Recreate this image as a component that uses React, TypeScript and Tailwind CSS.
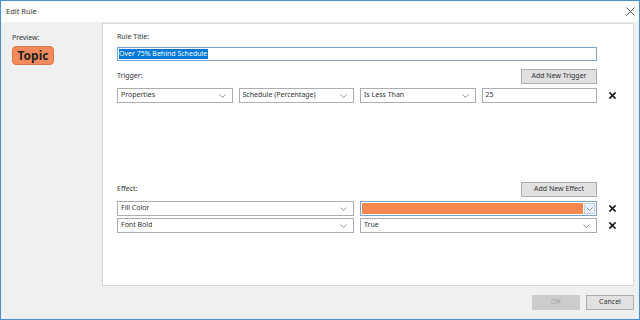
import type { ReactNode } from 'react';

const FONT = { fontFamily: '"Noto Sans", "Liberation Sans", Arial, sans-serif' };

function Chevron() {
  return (
    <svg width="7" height="4" viewBox="0 0 7 4" className="shrink-0">
      <polyline points="0.5,0.5 3.5,3.5 6.5,0.5" fill="none" stroke="#7a7a7a" strokeWidth="0.8" />
    </svg>
  );
}

function DelX() {
  return (
    <svg width="7" height="7" viewBox="0 0 7 7" className="shrink-0">
      <path d="M1 1L6 6M6 1L1 6" stroke="#111" strokeWidth="1.6" strokeLinecap="square" />
    </svg>
  );
}

function Select({ value }: { value: string }) {
  return (
    <div className="flex h-[15px] items-center justify-between border border-[#abadb3] bg-white pl-[3px] pr-[6px] text-[7px] text-[#333]">
      <span className="truncate">{value}</span>
      <Chevron />
    </div>
  );
}

function Btn({ children, disabled }: { children: ReactNode; disabled?: boolean }) {
  return (
    <div
      className={
        'flex h-[15px] items-center justify-center border text-[7px] ' +
        (disabled
          ? 'border-[#cccccc] bg-[#cccccc] text-[#a0a0a0]'
          : 'border-[#adadad] bg-[#e1e1e1] text-[#333]')
      }
    >
      {children}
    </div>
  );
}

function RowWithDelete({ children }: { children: ReactNode }) {
  return (
    <div className="flex items-center">
      <div className="w-[480px]">{children}</div>
      <div className="flex w-[30px] justify-center">
        <DelX />
      </div>
    </div>
  );
}

export default function App() {
  return (
    <div
      className="flex h-[320px] w-[640px] flex-col overflow-hidden border border-[#4a8fd6] bg-[#f0f0f0]"
      style={FONT}
    >
      {/* title bar */}
      <div className="flex h-[21px] shrink-0 items-center justify-between bg-white pl-[5px] pr-[4px]">
        <span className="text-[7.5px] text-[#333]">Edit Rule</span>
        <svg width="9" height="9" viewBox="0 0 9 9">
          <path d="M0.5 0.5L8.5 8.5M8.5 0.5L0.5 8.5" stroke="#333" strokeWidth="0.8" />
        </svg>
      </div>

      <div className="flex min-h-0 flex-1 pt-[1px]">
        {/* preview */}
        <div className="w-[101px] shrink-0 pl-[11px] pt-[10px]">
          <div className="text-[7px] leading-[10px] text-[#333]">Preview:</div>
          <div className="mt-[3px] flex h-[19px] w-[42px] items-center justify-center rounded-[4px] border border-[#d67a4e] bg-[#f48a5b] text-[12px] font-bold text-[#222]">
            Topic
          </div>
        </div>

        <div className="flex min-w-0 flex-1 flex-col pr-[5px]">
          {/* panel */}
          <div className="h-[263px] border border-[#d9d9d9] bg-white pl-[14px]">
            <div className="mt-[8px] text-[7px] leading-[10px] text-[#333]">Rule Title:</div>
            <div className="mt-[5px] flex h-[14px] w-[480px] items-center border border-[#7aa0cc] px-[1px]">
              <span className="bg-[#0078d7] pr-[1px] text-[7px] leading-[10px] text-white">
                Over 75% Behind Schedule
              </span>
            </div>

            <div className="mt-[8px] flex h-[15px] w-[480px] items-center justify-between">
              <span className="text-[7px] text-[#333]">Trigger:</span>
              <div className="w-[76px]">
                <Btn>Add New Trigger</Btn>
              </div>
            </div>
            <div className="mt-[4px]">
              <RowWithDelete>
                <div className="grid grid-cols-4 gap-[6px]">
                  <Select value="Properties" />
                  <Select value="Schedule (Percentage)" />
                  <Select value="Is Less Than" />
                  <div className="flex h-[15px] items-center border border-[#abadb3] pl-[3px] text-[7px] text-[#333]">
                    25
                  </div>
                </div>
              </RowWithDelete>
            </div>

            <div className="mt-[79px] flex h-[15px] w-[480px] items-center justify-between">
              <span className="text-[7px] text-[#333]">Effect:</span>
              <div className="w-[76px]">
                <Btn>Add New Effect</Btn>
              </div>
            </div>
            <div className="mt-[4px] flex flex-col gap-[2px]">
              <RowWithDelete>
                <div className="grid grid-cols-2 gap-[6px]">
                  <Select value="Fill Color" />
                  <div className="flex h-[15px] items-stretch border border-[#7aa0cc] bg-white p-[1px]">
                    <div className="flex-1 bg-[#f4884f]" />
                    <div className="ml-[1px] flex w-[11px] items-center justify-center border border-[#b9d1ea] bg-[#e8f1fb]">
                      <Chevron />
                    </div>
                  </div>
                </div>
              </RowWithDelete>
              <RowWithDelete>
                <div className="grid grid-cols-2 gap-[6px]">
                  <Select value="Font Bold" />
                  <Select value="True" />
                </div>
              </RowWithDelete>
            </div>
          </div>

          {/* footer */}
          <div className="mt-[9px] flex justify-end gap-[6px]">
            <div className="w-[48px]">
              <Btn disabled>OK</Btn>
            </div>
            <div className="w-[48px]">
              <Btn>Cancel</Btn>
            </div>
          </div>
        </div>
      </div>
    </div>
  );
}
